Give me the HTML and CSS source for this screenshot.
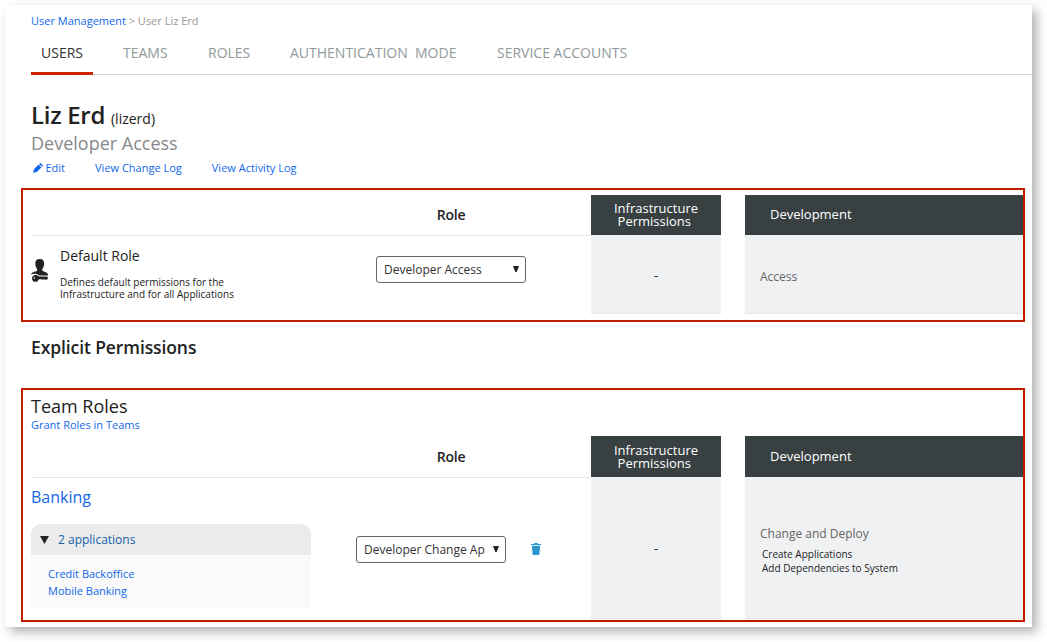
FILE: index.html
```html
<!DOCTYPE html>
<html lang="en">
<head>
<meta charset="utf-8">
<title>User Management</title>
<link rel="stylesheet" href="styles.css">
</head>
<body>
<main class="panel">
  <nav class="breadcrumb"><a href="#">User Management</a> &gt; <span>User Liz Erd</span></nav>
  <nav class="tabs">
    <a class="tab tab-active w-users" href="#"><span>USERS</span></a>
    <a class="tab w-teams" href="#"><span>TEAMS</span></a>
    <a class="tab w-roles" href="#"><span>ROLES</span></a>
    <a class="tab w-auth" href="#"><span>AUTHENTICATION&nbsp; MODE</span></a>
    <a class="tab w-service" href="#"><span>SERVICE ACCOUNTS</span></a>
  </nav>
  <header class="profile">
    <h1 class="name">Liz Erd <small class="login">(lizerd)</small></h1>
    <p class="access">Developer Access</p>
    <div class="actions">
      <a href="#" class="edit"><svg class="pencil" viewBox="0 0 12 12"><path d="M.3 11.700l.8-4.200L6.700 1.900l3.400 3.400-5.600 5.600zM7.400 1.200l.9-.9q.5-.4 1 0l2.400 2.400q.4.5 0 1l-.9.900z" fill="#1068eb"/></svg>Edit</a>
      <a href="#">View Change Log</a>
      <a href="#">View Activity Log</a>
    </div>
  </header>

  <section class="box box-default">
    <div class="grid grid-default">
      <div class="head"></div>
      <div class="head">Role</div>
      <div class="dark">Infrastructure<br>Permissions&nbsp;</div>
      <div class="dark dark-left">Development</div>
      <div class="default-role">
        <svg class="person" viewBox="0 0 18 24"><path d="M4.300 6C4.100 2.800 5.600 1 8.700 1s4.600 1.800 4.400 5c-.1 2.200-.8 3.800-1.800 4.900v1.800c2 1.300 5.700 1.300 5.700 4.300v.6H8C6.500 15.800 3 15.200 0 16.600c.2-2.600 4-2.600 6.100-3.900v-1.800C5.100 9.800 4.400 8.200 4.300 6z" fill="#222"/><path fill-rule="evenodd" d="M4.500 17c1.500 0 2.600.6 3.200 1.600h8.400l1 1.400-1.200 1.700h-1.200l-.8-.5-.9.600-.9-.6-.9.600-.8-.6H7.900c-.5 1.500-1.700 2.600-3.400 2.600-2 0-3.500-1.500-3.500-3.400S2.500 17 4.500 17zm-1.200 2.200a.8.8 0 100 1.600.8.8 0 000-1.600z" fill="#222"/></svg>
        <div>
          <h3 class="default-title">Default Role</h3>
          <p class="default-text">Defines default permissions for the<br>Infrastructure and for all Applications</p>
        </div>
      </div>
      <div class="role-cell"><div class="select"><span class="value">Developer Access</span><svg class="arrow" viewBox="0 0 6 6"><path d="M0 0h6L3.700 6H2.300z"/></svg></div></div>
      <div class="shade dash">-</div>
      <div class="shade perm"><p class="perm-title">Access</p></div>
    </div>
  </section>

  <h2 class="explicit">Explicit Permissions</h2>

  <section class="box box-team">
    <h2 class="team-title">Team Roles</h2>
    <a class="grant" href="#">Grant Roles in Teams</a>
    <div class="grid grid-team">
      <div class="head"></div>
      <div class="head">Role</div>
      <div class="dark">Infrastructure<br>Permissions&nbsp;</div>
      <div class="dark dark-left">Development</div>
      <div class="team">
        <a class="team-name" href="#">Banking</a>
        <div class="apps-head"><svg class="toggle" viewBox="0 0 9 8"><path d="M0 0h9L4.500 8z"/></svg><span class="apps-count">2 applications</span></div>
        <div class="apps"><a href="#">Credit Backoffice</a><a href="#">Mobile Banking</a></div>
      </div>
      <div class="role-cell role-team"><div class="select"><span class="value">Developer Change Ap</span><svg class="arrow" viewBox="0 0 6 6"><path d="M0 0h6L3.700 6H2.300z"/></svg></div><svg class="trash" viewBox="0 0 10 12"><path d="M0 1h3V0h4v1h3v1.300H0zM.8 3h8.400l-.9 9H1.700z" fill="#2f97cf"/></svg></div>
      <div class="shade dash">-</div>
      <div class="shade perm">
        <p class="perm-title">Change and Deploy</p>
        <p class="perm-list">Create Applications<br>Add Dependencies to System</p>
      </div>
    </div>
  </section>
</main>
</body>
</html>
```
FILE: styles.css
```css
* { box-sizing: border-box; }
body {
  margin: 0;
  padding: 5px;
  height: 642px;
  overflow: hidden;
  background: #fff;
  color: #222;
  font: 11px/16px "Open Sans", sans-serif;
}
h1, h2, h3, p { margin: 0; font-weight: 400; }
a { color: #1068eb; text-decoration: none; }
svg { display: block; flex: none; }
.panel {
  width: 1027px;
  height: 622px;
  background: #fff;
  box-shadow: 5px 5px 10px rgba(0, 0, 0, .3);
}
.breadcrumb { padding: 8px 0 0 26px; height: 24px; color: #999; }
.tabs {
  display: flex;
  gap: 20px;
  height: 46px;
  margin-left: 26px;
  border-bottom: 1px solid #d4d4d4;
}
.tab {
  height: 46px;
  padding: 14px 10px 0;
  color: #8f9a9a;
  font-size: 14px;
  line-height: 20px;
  white-space: nowrap;
}
.tab-active { color: #333; border-bottom: 3px solid #cf2200; }
.w-users { width: 62px; }
.w-teams { width: 65px; }
.w-roles { width: 62px; }
.w-auth { width: 187px; }
.profile { padding: 23px 0 0 26px; height: 113px; }
.name { font-size: 24px; line-height: 33px; font-weight: 600; letter-spacing: -.3px; }
.login { font-size: 14px; font-weight: 400; letter-spacing: 0; }
.access { margin-top: -4px; font-size: 18px; line-height: 24px; color: #888; }
.actions { display: flex; margin-top: 5px; gap: 30px; }
.edit { display: flex; align-items: center; gap: 2.500px; padding-left: 2px; }
.pencil { width: 10px; height: 10px; }
.box { width: 1004px; margin-left: 16px; border: 2px solid #bf1c00; padding-left: 8px; }
.box-default { height: 134px; padding-top: 5px; }
.box-team { height: 234px; padding-top: 5px; }
.grid { display: grid; grid-template-columns: 280px 280px 130px 278px; }
.grid > :nth-child(4n) { margin-left: 24px; width: 278px; }
.grid-default { grid-template-rows: 40px 79px; }
.grid-team { grid-template-rows: 41px 142px; margin-top: 4px; }
.head {
  display: flex;
  align-items: center;
  justify-content: center;
  margin-bottom: -1px;
  border-bottom: 1px solid #e5e6e6;
  font-size: 14px;
  font-weight: 600;
  letter-spacing: -.2px;
}
.dark {
  display: flex;
  align-items: center;
  justify-content: center;
  background: #384041;
  color: #fff;
  font-size: 13px;
  line-height: 13px;
  font-weight: 500;
  text-align: center;
}
.dark-left { justify-content: flex-start; padding-left: 25px; padding-bottom: 1px; }
.default-role { display: flex; gap: 11px; padding-top: 11px; }
.person { width: 18px; height: 24px; margin-top: 12px; }
.default-title { font-size: 14px; line-height: 20px; }
.default-text { margin-top: 10px; font-size: 10px; line-height: 12px; }
.role-cell { display: flex; justify-content: center; align-items: flex-start; padding-top: 21px; }
.select {
  display: flex;
  justify-content: space-between;
  align-items: center;
  width: 150px;
  height: 27px;
  padding: 0 6px 0 7px;
  border: 1px solid #666;
  border-radius: 3px;
  color: #333;
  font-size: 12px;
  white-space: nowrap;
}
.arrow { width: 6px; height: 6px; margin-bottom: 1px; fill: #222; }
.shade { background: #f0f1f3; border-bottom: 1px solid #e5e6e6; }
.dash { display: flex; align-items: center; justify-content: center; padding-top: 1px; font-size: 13px; }
.perm { display: flex; flex-direction: column; justify-content: center; padding: 5px 0 0 15px; }
.perm-title { font-size: 12px; line-height: 18px; color: #666; }
.perm-list { padding-left: 2px; margin-top: 4px; font-size: 10px; line-height: 14px; }
.explicit { padding-left: 26px; height: 66px; padding-top: 13px; font-size: 17.500px; line-height: 24px; font-weight: 600; letter-spacing: -.1px; }
.team-title { font-size: 18px; line-height: 23px; }
.grant { display: block; height: 14px; line-height: 14px; }
.team { padding-top: 9px; }
.team-name { display: block; font-size: 16px; line-height: 22px; }
.apps-head {
  display: flex;
  align-items: center;
  height: 31px;
  margin-top: 16px;
  padding-left: 9px;
  gap: 9px;
  background: #ebebeb;
  border-radius: 10px 10px 0 0;
}
.toggle { width: 9px; height: 8px; fill: #222; }
.apps-count { color: #1461a8; font-size: 12px; }
.apps { display: flex; flex-direction: column; height: 54px; padding: 10px 0 0 17px; line-height: 17px; background: #fafafa; }
.role-team { padding: 59px 5px 0 0; gap: 25px; }
.trash { width: 10px; height: 12px; margin-top: 7px; }
```
